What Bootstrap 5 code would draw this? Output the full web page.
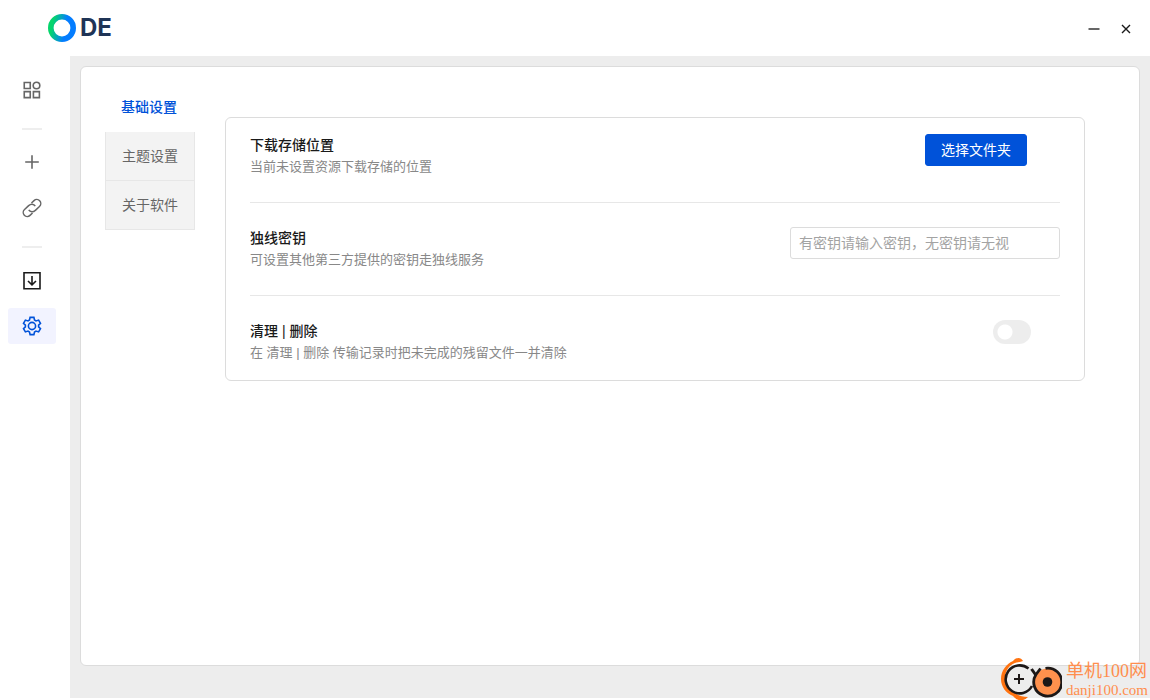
<!DOCTYPE html>
<html lang="zh-CN">
<head>
<meta charset="utf-8">
<meta name="viewport" content="width=device-width, initial-scale=1">
<title>ODE 设置</title>
<link href="https://cdn.jsdelivr.net/npm/bootstrap@5.3.0/dist/css/bootstrap.min.css" rel="stylesheet">
<style>
  body { font-family: "Liberation Sans", "Noto Sans CJK SC", sans-serif; font-size: 14px; line-height: 22px; color: #1a1a1a; }
  .app { padding-bottom: 2px; }
  .titlebar { height: 56px; padding: 0 8px 0 48px; }
  .brand-name { font-family: Inter, sans-serif; font-size: 24px; font-weight: 700; color: #1f3456; line-height: 28px; }
  .icon-btn { border: 0; background: none; padding: 0; width: 32px; height: 32px; color: #1a1a1a; display: flex; align-items: center; justify-content: center; }
  .sidebar { width: 70px; padding: 16px 14px 0 8px; gap: 10px; }
  .side-item { height: 36px; border-radius: 3px; color: #666; display: flex; align-items: center; justify-content: center; }
  .side-item.dark { color: #1a1a1a; }
  .side-item.active { background: #f2f3ff; color: #0052d9; }
  .side-rule { height: 2px; margin: 10px 14px 4px; background: #eee; }
  .workspace { background: #ededed; padding: 10px 10px 32px; }
  .sheet { border: 1px solid #dcdcdc; border-radius: 6px; padding: 16px 54px 24px 24px; gap: 30px; }
  .tabs-col { width: 90px; }
  .tab-btn { height: 49px; padding: 0; border: 1px solid #e7e7e7; border-top: 0; border-radius: 0; background: #f3f3f3; color: #666; }
  .tab-btn.active { border-color: transparent; background: none; color: #0052d9; font-weight: 500; padding-right: 2px; }
  .panel { border: 1px solid #dcdcdc; border-radius: 6px; margin-top: 34px; padding: 16px 24px; }
  .setting + .setting { border-top: 1px solid #e7e7e7; margin-top: 24px; padding-top: 24px; }
  .setting-title { font-size: 14px; line-height: 22px; font-weight: 500; margin: 0; }
  .setting-desc { font-size: 13px; line-height: 22px; color: #888; margin: 0; }
  .btn-pick { --bs-btn-bg: #0052d9; --bs-btn-border-color: #0052d9; --bs-btn-border-radius: 3px; --bs-btn-font-size: 14px; --bs-btn-line-height: 22px; --bs-btn-padding-y: 4px; --bs-btn-padding-x: 15px; margin-right: 33px; }
  .key-input { width: 270px; height: 32px; padding: 4px 8px; border-color: #dcdcdc; border-radius: 3px; font-size: 14px; line-height: 22px; }
  .key-input::placeholder { color: #a3a3a3; }
  .toggle { appearance: none; width: 38px; height: 24px; margin: 0 29px 0 0; border-radius: 12px; cursor: pointer; background: radial-gradient(circle at 12px 12px, #fff 7px, #ededed 8px); }
  .toggle:checked { background: radial-gradient(circle at 26px 12px, #fff 7px, #0052d9 8px); }
  .stamp { right: 2px; bottom: 0; color: #ff8e4e; font-family: "Liberation Serif", "Noto Sans CJK SC", serif; pointer-events: none; }
  .stamp-name { font-size: 18px; line-height: 20px; }
  .stamp-site { font-size: 15px; line-height: 18px; padding-bottom: 1px; }
</style>
</head>
<body>
<div class="app d-flex flex-column min-vh-100 position-relative">
  <header class="titlebar d-flex align-items-center justify-content-between">
    <div class="d-flex align-items-center gap-1">
      <svg width="28" height="28" viewBox="0 0 28 28" aria-hidden="true">
        <defs><linearGradient id="ring" x1="0" y1="0.4" x2="1" y2="0.6"><stop offset=".05" stop-color="#05d56c"/><stop offset=".65" stop-color="#047dff"/></linearGradient></defs>
        <circle cx="14" cy="14" r="11.2" fill="none" stroke="url(#ring)" stroke-width="5.6"/>
      </svg>
      <span class="brand-name">DE</span>
    </div>
    <div class="d-flex">
      <button class="icon-btn" type="button" aria-label="最小化"><svg width="16" height="16" viewBox="0 0 16 16"><path d="M2.5 9h11" stroke="#666" stroke-width="2"/></svg></button>
      <button class="icon-btn" type="button" aria-label="关闭"><svg width="16" height="16" viewBox="0 0 16 16"><path d="M4 5l8 8M12 5l-8 8" stroke="currentColor" stroke-width="1.4"/></svg></button>
    </div>
  </header>
  <div class="d-flex flex-grow-1">
    <nav class="sidebar d-flex flex-column flex-shrink-0">
      <a class="side-item" href="#" aria-label="应用"><svg width="20" height="20" viewBox="0 0 20 20" fill="none" stroke="currentColor" stroke-width="1.6"><path d="M2.25 2.5h6v6h-6zM2.25 11.6h6v6h-6zM11.4 11.6h6v6h-6z"/><circle cx="14.5" cy="5.5" r="3.3"/></svg></a>
      <div class="side-rule"></div>
      <a class="side-item" href="#" aria-label="新建"><svg width="20" height="20" viewBox="0 0 20 20" fill="none" stroke="currentColor" stroke-width="1.6"><path d="M10 3.2v13.6M3.2 10h13.6"/></svg></a>
      <a class="side-item" href="#" aria-label="链接"><svg width="20" height="20" viewBox="0 0 20 20" fill="none" stroke="currentColor" stroke-width="1.5"><g transform="rotate(-43 10 10)"><path d="M13 6H16.500a4 4 0 0 1 0 8H10.500A4 4 0 0 1 6.300 9.200"/><path d="M7 14H3.500a4 4 0 0 1 0-8H9.500A4 4 0 0 1 13.700 10.800"/></g></svg></a>
      <div class="side-rule"></div>
      <a class="side-item dark" href="#" aria-label="下载"><svg width="20" height="20" viewBox="0 0 20 20" fill="none" stroke="currentColor" stroke-width="1.6"><path d="M2 2.700h16v16H2zM10 6v8.700M6 11l4 3.900 4-3.900"/></svg></a>
      <a class="side-item active" href="#" aria-label="设置"><svg width="20" height="20" viewBox="0 0 20 20" fill="none" stroke="currentColor" stroke-width="1.6"><path d="M8.1 1.400h3.800l.6 2.600 1.500.9 2.600-.8 1.900 3.300-1.900 1.800v1.600l1.900 1.800-1.900 3.300-2.600-.8-1.500.9-.6 2.600H8.100l-.6-2.600L6 15.100l-2.600.8-1.900-3.300 1.900-1.800V9.200L1.500 7.400l1.900-3.300L6 4.900 7.500 4z"/><circle cx="10" cy="10" r="3.6"/></svg></a>
    </nav>
    <main class="workspace d-flex flex-grow-1">
      <div class="sheet d-flex flex-grow-1 align-items-start bg-white">
        <div class="tabs-col d-flex flex-column flex-shrink-0" role="tablist">
          <button class="tab-btn active" type="button" role="tab" aria-selected="true">基础设置</button>
          <button class="tab-btn" type="button" role="tab" aria-selected="false">主题设置</button>
          <button class="tab-btn" type="button" role="tab" aria-selected="false">关于软件</button>
        </div>
        <section class="panel flex-grow-1">
          <div class="setting d-flex justify-content-between align-items-start">
            <div>
              <h2 class="setting-title">下载存储位置</h2>
              <p class="setting-desc">当前未设置资源下载存储的位置</p>
            </div>
            <button class="btn btn-primary btn-pick" type="button">选择文件夹</button>
          </div>
          <div class="setting d-flex justify-content-between align-items-start">
            <div>
              <h2 class="setting-title"><label for="key">独线密钥</label></h2>
              <p class="setting-desc">可设置其他第三方提供的密钥走独线服务</p>
            </div>
            <input id="key" class="form-control key-input" type="text" placeholder="有密钥请输入密钥，无密钥请无视">
          </div>
          <div class="setting d-flex justify-content-between align-items-start">
            <div>
              <h2 class="setting-title"><label for="clean">清理 | 删除</label></h2>
              <p class="setting-desc">在 清理 | 删除 传输记录时把未完成的残留文件一并清除</p>
            </div>
            <input id="clean" class="toggle" type="checkbox" role="switch">
          </div>
        </section>
      </div>
    </main>
  </div>
  <div class="stamp position-absolute d-flex align-items-end gap-1">
    <svg width="61" height="44" viewBox="0 0 61 44" fill="none" aria-hidden="true">
      <path d="M22 5C20 1 15 1 12 5 5 8 0 15 0 23c0 8 5 14 12 17 4 5 10 6 15 1-5 0-9-1-13-4C8 34 4 30 4 23 4 15 8 9 14 7c3-1 6-1 8-2z" fill="#ff7310"/>
      <path d="M27.500 12.500A14 14 0 1 0 31 30" stroke="#1d1817" stroke-width="2.600"/>
      <path d="M30.500 13l5 7" stroke="#1d1817" stroke-width="3"/>
      <path d="M18 18v10M13 23h10" stroke="#1d1817" stroke-width="2"/>
      <circle cx="46.500" cy="26" r="13.500" fill="#ff914d"/>
      <path d="M44.500 12.300A14 14 0 1 1 35 18.500l4.500-6" stroke="#1d1817" stroke-width="2.800"/>
      <circle cx="46.500" cy="26" r="4.800" fill="#1d1817"/>
    </svg>
    <div>
      <div class="stamp-name">单机100网</div>
      <div class="stamp-site">danji100.com</div>
    </div>
  </div>
</div>
<script src="https://cdn.jsdelivr.net/npm/bootstrap@5.3.0/dist/js/bootstrap.bundle.min.js"></script>
</body>
</html>
